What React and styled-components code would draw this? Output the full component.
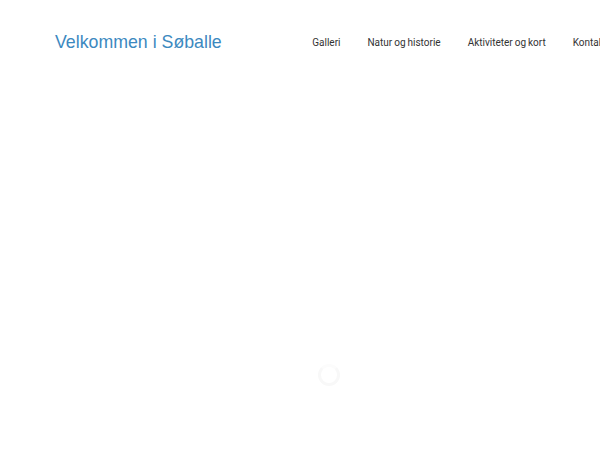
import React from "react"
import styled, { createGlobalStyle, keyframes } from "styled-components"

const GlobalStyle = createGlobalStyle`
  html, body {
    margin: 0;
    padding: 0;
    background: #ffffff;
    overflow: hidden;
  }
  body {
    font-family: Roboto, "Liberation Sans", sans-serif;
  }
`

const Page = styled.div`
  width: 600px;
  height: 450px;
  position: relative;
  overflow: hidden;
  background: #ffffff;
`

const Header = styled.header`
  display: flex;
  align-items: center;
  height: 84px;
  padding: 0 0 0 55px;
  white-space: nowrap;
`

const Brand = styled.a`
  font-family: "Liberation Sans", Arial, sans-serif;
  font-size: 17.75px;
  color: #3c89bf;
  text-decoration: none;
  margin-right: 77px;
  flex-shrink: 0;
`

const Nav = styled.nav`
  display: flex;
  flex-shrink: 0;
`

const NavLink = styled.a`
  font-family: Roboto, sans-serif;
  font-size: 10px;
  word-spacing: -0.5px;
  color: #333333;
  text-decoration: none;
  padding: 0 13.5px;
`

const spin = keyframes`
  to { transform: rotate(360deg); }
`

// preloader ring, barely visible on the white overlay
const Loader = styled.div`
  position: absolute;
  left: 318px;
  top: 364px;
  width: 16px;
  height: 16px;
  border: 3px solid #f8f8f8;
  border-top-color: #fcfcfc;
  border-radius: 50%;
  animation: ${spin} 1s linear infinite;
`

const links = ["Galleri", "Natur og historie", "Aktiviteter og kort", "Kontakt"]

const App = () => {
  return (
    <Page>
      <GlobalStyle />
      <Header>
        <Brand href="#">Velkommen i Søballe</Brand>
        <Nav>
          {links.map((l) => (
            <NavLink key={l} href="#">
              {l}
            </NavLink>
          ))}
        </Nav>
      </Header>
      <Loader />
    </Page>
  )
}

export default App
